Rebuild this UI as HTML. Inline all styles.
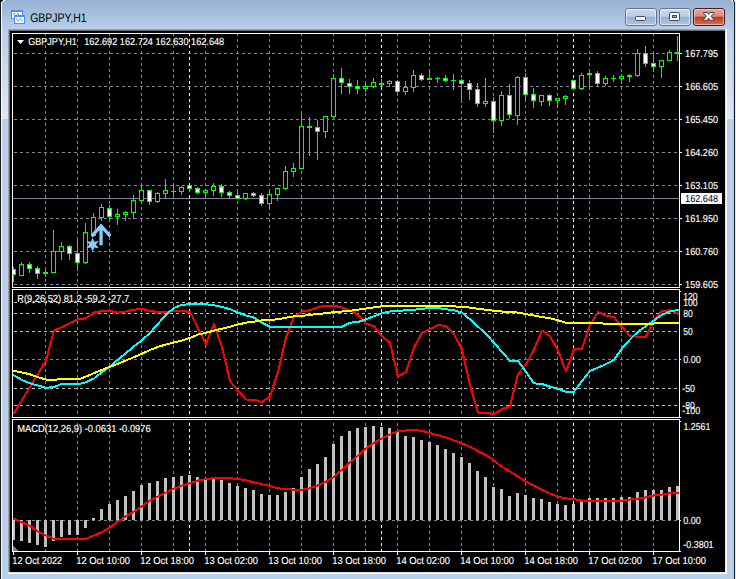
<!DOCTYPE html>
<html lang="en"><head><meta charset="utf-8"><title>GBPJPY,H1</title>
<style>html,body{margin:0;padding:0;background:#b9d0ea;overflow:hidden}svg{display:block}text{font-family:"Liberation Sans", sans-serif;white-space:pre;text-rendering:geometricPrecision}</style></head><body>
<svg width="736" height="579" viewBox="0 0 736 579">
<defs><linearGradient id="gt" x1="0" y1="0" x2="0" y2="1"><stop offset="0" stop-color="#97b1d2"/><stop offset="1" stop-color="#b8d0ea"/></linearGradient><linearGradient id="gb" x1="0" y1="0" x2="0" y2="1"><stop offset="0" stop-color="#cddcee"/><stop offset="0.46" stop-color="#b9cde5"/><stop offset="0.5" stop-color="#97b0d1"/><stop offset="1" stop-color="#b0c8e3"/></linearGradient><linearGradient id="gr" x1="0" y1="0" x2="0" y2="1"><stop offset="0" stop-color="#e8aa9c"/><stop offset="0.46" stop-color="#d78a78"/><stop offset="0.5" stop-color="#b93a1e"/><stop offset="1" stop-color="#d2745e"/></linearGradient><clipPath id="cm"><rect x="13" y="34" width="666" height="253"/></clipPath><clipPath id="c1"><rect x="13" y="290" width="666" height="127"/></clipPath><clipPath id="c2"><rect x="13" y="420" width="666" height="131"/></clipPath></defs>
<rect x="0" y="0" width="736" height="579" fill="#b9d0ea"/>
<rect x="0" y="0" width="736" height="30" fill="url(#gt)"/>
<linearGradient id="gs" x1="0" y1="0" x2="0" y2="1"><stop offset="0" stop-color="#fff" stop-opacity="0"/><stop offset="1" stop-color="#fff" stop-opacity="0.5"/></linearGradient>
<rect x="2" y="30" width="6" height="89" fill="url(#gs)"/>
<rect x="727" y="30" width="6" height="89" fill="url(#gs)"/>
<rect x="0" y="2" width="1" height="577" fill="#1a1a1a"/>
<rect x="1" y="2" width="1" height="577" fill="#fbfcfe"/>
<rect x="735" y="2" width="1" height="577" fill="#dfe5ee"/>
<rect x="734" y="2" width="1" height="577" fill="#1e2228"/>
<rect x="733" y="2" width="1" height="577" fill="#7fdcf7"/>
<path d="M0 0H3V1H2V2H0Z" fill="#1a1a1a"/>
<path d="M3 0h2v1h-1v1h-2v-1h1z" fill="#e8eef6"/>
<path d="M733 0h1v2h-1z" fill="#1e2228"/>
<path d="M731 0h2v2h-1v-1h-1z" fill="#e8f4fb"/>
<path d="M734 0h2v2h-2z" fill="#dfe5ee"/>
<g shape-rendering="crispEdges">
<rect x="11" y="10" width="12" height="9" fill="#4d8cf6"/>
<rect x="12" y="12" width="10" height="6" fill="#fff"/>
<rect x="14" y="15" width="11" height="9" fill="#4d8cf6"/>
<rect x="15" y="17" width="9" height="6" fill="#fff"/>
</g>
<path d="M13.4 14.6 L15 13.2 M17.2 13 L18.8 15" fill="none" stroke="#4d8cf6" stroke-width="1.1"/>
<polyline points="16.3,18.4 18.3,21.3 20.4,18.5 22.6,21.5" fill="none" stroke="#4d8cf6" stroke-width="0.9"/>
<text x="30.2" y="22" font-size="12.5" fill="#000" text-anchor="start" textLength="56.4" lengthAdjust="spacingAndGlyphs">GBPJPY,H1</text>
<rect x="625.5" y="8.5" width="31" height="17" rx="2.5" fill="url(#gb)" stroke="#63738c"/>
<rect x="626.5" y="9.5" width="29" height="15" rx="1.5" fill="none" stroke="#ffffff" stroke-opacity="0.55"/>
<rect x="659.5" y="8.5" width="31" height="17" rx="2.5" fill="url(#gb)" stroke="#63738c"/>
<rect x="660.5" y="9.5" width="29" height="15" rx="1.5" fill="none" stroke="#ffffff" stroke-opacity="0.55"/>
<rect x="693.5" y="8.5" width="31" height="17" rx="2.5" fill="url(#gr)" stroke="#4b1822"/>
<rect x="694.5" y="9.5" width="29" height="15" rx="1.5" fill="none" stroke="#ffd9cf" stroke-opacity="0.55"/>
<rect x="635.5" y="16.5" width="10" height="4" rx="1" fill="#f4f4f4" stroke="#414b5c"/>
<rect x="669.5" y="12.5" width="10" height="8" rx="1" fill="#f6f6f6" stroke="#414b5c"/><rect x="672.5" y="15.5" width="4" height="2" fill="#8fa9cb" stroke="#414b5c"/>
<polygon points="703.90,12.90 707.20,12.90 708.70,15.10 710.20,12.90 713.50,12.90 710.45,16.30 713.50,19.70 710.20,19.70 708.70,17.50 707.20,19.70 703.90,19.70 706.95,16.30" fill="#fff" stroke="#40475e" stroke-width="1.7" stroke-linejoin="round" paint-order="stroke"/>
<g shape-rendering="crispEdges">
<rect x="8" y="29" width="719" height="545" fill="#ffffff"/>
<rect x="8" y="29" width="718" height="544" fill="#e3e3e3"/>
<rect x="8" y="29" width="717" height="543" fill="#a0a0a0"/>
<rect x="9" y="30" width="716" height="542" fill="#696969"/>
<rect x="10" y="31" width="715" height="541" fill="#000000"/>
<line x1="45.5" y1="34" x2="45.5" y2="287" stroke="#778899" stroke-dasharray="3 3" stroke-dashoffset="1"/>
<line x1="77.5" y1="34" x2="77.5" y2="287" stroke="#778899" stroke-dasharray="3 3" stroke-dashoffset="1"/>
<line x1="109.5" y1="34" x2="109.5" y2="287" stroke="#778899" stroke-dasharray="3 3" stroke-dashoffset="1"/>
<line x1="141.5" y1="34" x2="141.5" y2="287" stroke="#778899" stroke-dasharray="3 3" stroke-dashoffset="1"/>
<line x1="173.5" y1="34" x2="173.5" y2="287" stroke="#778899" stroke-dasharray="3 3" stroke-dashoffset="1"/>
<line x1="205.5" y1="34" x2="205.5" y2="287" stroke="#778899" stroke-dasharray="3 3" stroke-dashoffset="1"/>
<line x1="237.5" y1="34" x2="237.5" y2="287" stroke="#778899" stroke-dasharray="3 3" stroke-dashoffset="1"/>
<line x1="269.5" y1="34" x2="269.5" y2="287" stroke="#778899" stroke-dasharray="3 3" stroke-dashoffset="1"/>
<line x1="301.5" y1="34" x2="301.5" y2="287" stroke="#778899" stroke-dasharray="3 3" stroke-dashoffset="1"/>
<line x1="333.5" y1="34" x2="333.5" y2="287" stroke="#778899" stroke-dasharray="3 3" stroke-dashoffset="1"/>
<line x1="365.5" y1="34" x2="365.5" y2="287" stroke="#778899" stroke-dasharray="3 3" stroke-dashoffset="1"/>
<line x1="397.5" y1="34" x2="397.5" y2="287" stroke="#778899" stroke-dasharray="3 3" stroke-dashoffset="1"/>
<line x1="429.5" y1="34" x2="429.5" y2="287" stroke="#778899" stroke-dasharray="3 3" stroke-dashoffset="1"/>
<line x1="461.5" y1="34" x2="461.5" y2="287" stroke="#778899" stroke-dasharray="3 3" stroke-dashoffset="1"/>
<line x1="493.5" y1="34" x2="493.5" y2="287" stroke="#778899" stroke-dasharray="3 3" stroke-dashoffset="1"/>
<line x1="525.5" y1="34" x2="525.5" y2="287" stroke="#778899" stroke-dasharray="3 3" stroke-dashoffset="1"/>
<line x1="557.5" y1="34" x2="557.5" y2="287" stroke="#778899" stroke-dasharray="3 3" stroke-dashoffset="1"/>
<line x1="589.5" y1="34" x2="589.5" y2="287" stroke="#778899" stroke-dasharray="3 3" stroke-dashoffset="1"/>
<line x1="621.5" y1="34" x2="621.5" y2="287" stroke="#778899" stroke-dasharray="3 3" stroke-dashoffset="1"/>
<line x1="653.5" y1="34" x2="653.5" y2="287" stroke="#778899" stroke-dasharray="3 3" stroke-dashoffset="1"/>
<line x1="189.5" y1="34" x2="189.5" y2="287" stroke="#f4f4f4" stroke-dasharray="3 3" stroke-dashoffset="1"/>
<line x1="381.5" y1="34" x2="381.5" y2="287" stroke="#f4f4f4" stroke-dasharray="3 3" stroke-dashoffset="1"/>
<line x1="573.5" y1="34" x2="573.5" y2="287" stroke="#f4f4f4" stroke-dasharray="3 3" stroke-dashoffset="1"/>
<line x1="45.5" y1="290" x2="45.5" y2="417" stroke="#778899" stroke-dasharray="3 3" stroke-dashoffset="5"/>
<line x1="77.5" y1="290" x2="77.5" y2="417" stroke="#778899" stroke-dasharray="3 3" stroke-dashoffset="5"/>
<line x1="109.5" y1="290" x2="109.5" y2="417" stroke="#778899" stroke-dasharray="3 3" stroke-dashoffset="5"/>
<line x1="141.5" y1="290" x2="141.5" y2="417" stroke="#778899" stroke-dasharray="3 3" stroke-dashoffset="5"/>
<line x1="173.5" y1="290" x2="173.5" y2="417" stroke="#778899" stroke-dasharray="3 3" stroke-dashoffset="5"/>
<line x1="205.5" y1="290" x2="205.5" y2="417" stroke="#778899" stroke-dasharray="3 3" stroke-dashoffset="5"/>
<line x1="237.5" y1="290" x2="237.5" y2="417" stroke="#778899" stroke-dasharray="3 3" stroke-dashoffset="5"/>
<line x1="269.5" y1="290" x2="269.5" y2="417" stroke="#778899" stroke-dasharray="3 3" stroke-dashoffset="5"/>
<line x1="301.5" y1="290" x2="301.5" y2="417" stroke="#778899" stroke-dasharray="3 3" stroke-dashoffset="5"/>
<line x1="333.5" y1="290" x2="333.5" y2="417" stroke="#778899" stroke-dasharray="3 3" stroke-dashoffset="5"/>
<line x1="365.5" y1="290" x2="365.5" y2="417" stroke="#778899" stroke-dasharray="3 3" stroke-dashoffset="5"/>
<line x1="397.5" y1="290" x2="397.5" y2="417" stroke="#778899" stroke-dasharray="3 3" stroke-dashoffset="5"/>
<line x1="429.5" y1="290" x2="429.5" y2="417" stroke="#778899" stroke-dasharray="3 3" stroke-dashoffset="5"/>
<line x1="461.5" y1="290" x2="461.5" y2="417" stroke="#778899" stroke-dasharray="3 3" stroke-dashoffset="5"/>
<line x1="493.5" y1="290" x2="493.5" y2="417" stroke="#778899" stroke-dasharray="3 3" stroke-dashoffset="5"/>
<line x1="525.5" y1="290" x2="525.5" y2="417" stroke="#778899" stroke-dasharray="3 3" stroke-dashoffset="5"/>
<line x1="557.5" y1="290" x2="557.5" y2="417" stroke="#778899" stroke-dasharray="3 3" stroke-dashoffset="5"/>
<line x1="589.5" y1="290" x2="589.5" y2="417" stroke="#778899" stroke-dasharray="3 3" stroke-dashoffset="5"/>
<line x1="621.5" y1="290" x2="621.5" y2="417" stroke="#778899" stroke-dasharray="3 3" stroke-dashoffset="5"/>
<line x1="653.5" y1="290" x2="653.5" y2="417" stroke="#778899" stroke-dasharray="3 3" stroke-dashoffset="5"/>
<line x1="189.5" y1="290" x2="189.5" y2="417" stroke="#f4f4f4" stroke-dasharray="3 3" stroke-dashoffset="5"/>
<line x1="381.5" y1="290" x2="381.5" y2="417" stroke="#f4f4f4" stroke-dasharray="3 3" stroke-dashoffset="5"/>
<line x1="573.5" y1="290" x2="573.5" y2="417" stroke="#f4f4f4" stroke-dasharray="3 3" stroke-dashoffset="5"/>
<line x1="45.5" y1="420" x2="45.5" y2="551" stroke="#778899" stroke-dasharray="3 3" stroke-dashoffset="3"/>
<line x1="77.5" y1="420" x2="77.5" y2="551" stroke="#778899" stroke-dasharray="3 3" stroke-dashoffset="3"/>
<line x1="109.5" y1="420" x2="109.5" y2="551" stroke="#778899" stroke-dasharray="3 3" stroke-dashoffset="3"/>
<line x1="141.5" y1="420" x2="141.5" y2="551" stroke="#778899" stroke-dasharray="3 3" stroke-dashoffset="3"/>
<line x1="173.5" y1="420" x2="173.5" y2="551" stroke="#778899" stroke-dasharray="3 3" stroke-dashoffset="3"/>
<line x1="205.5" y1="420" x2="205.5" y2="551" stroke="#778899" stroke-dasharray="3 3" stroke-dashoffset="3"/>
<line x1="237.5" y1="420" x2="237.5" y2="551" stroke="#778899" stroke-dasharray="3 3" stroke-dashoffset="3"/>
<line x1="269.5" y1="420" x2="269.5" y2="551" stroke="#778899" stroke-dasharray="3 3" stroke-dashoffset="3"/>
<line x1="301.5" y1="420" x2="301.5" y2="551" stroke="#778899" stroke-dasharray="3 3" stroke-dashoffset="3"/>
<line x1="333.5" y1="420" x2="333.5" y2="551" stroke="#778899" stroke-dasharray="3 3" stroke-dashoffset="3"/>
<line x1="365.5" y1="420" x2="365.5" y2="551" stroke="#778899" stroke-dasharray="3 3" stroke-dashoffset="3"/>
<line x1="397.5" y1="420" x2="397.5" y2="551" stroke="#778899" stroke-dasharray="3 3" stroke-dashoffset="3"/>
<line x1="429.5" y1="420" x2="429.5" y2="551" stroke="#778899" stroke-dasharray="3 3" stroke-dashoffset="3"/>
<line x1="461.5" y1="420" x2="461.5" y2="551" stroke="#778899" stroke-dasharray="3 3" stroke-dashoffset="3"/>
<line x1="493.5" y1="420" x2="493.5" y2="551" stroke="#778899" stroke-dasharray="3 3" stroke-dashoffset="3"/>
<line x1="525.5" y1="420" x2="525.5" y2="551" stroke="#778899" stroke-dasharray="3 3" stroke-dashoffset="3"/>
<line x1="557.5" y1="420" x2="557.5" y2="551" stroke="#778899" stroke-dasharray="3 3" stroke-dashoffset="3"/>
<line x1="589.5" y1="420" x2="589.5" y2="551" stroke="#778899" stroke-dasharray="3 3" stroke-dashoffset="3"/>
<line x1="621.5" y1="420" x2="621.5" y2="551" stroke="#778899" stroke-dasharray="3 3" stroke-dashoffset="3"/>
<line x1="653.5" y1="420" x2="653.5" y2="551" stroke="#778899" stroke-dasharray="3 3" stroke-dashoffset="3"/>
<line x1="189.5" y1="420" x2="189.5" y2="551" stroke="#f4f4f4" stroke-dasharray="3 3" stroke-dashoffset="3"/>
<line x1="381.5" y1="420" x2="381.5" y2="551" stroke="#f4f4f4" stroke-dasharray="3 3" stroke-dashoffset="3"/>
<line x1="573.5" y1="420" x2="573.5" y2="551" stroke="#f4f4f4" stroke-dasharray="3 3" stroke-dashoffset="3"/>
<line x1="13" y1="53.5" x2="679" y2="53.5" stroke="#778899" stroke-dasharray="3 3" stroke-dashoffset="5"/>
<line x1="13" y1="86.5" x2="679" y2="86.5" stroke="#778899" stroke-dasharray="3 3" stroke-dashoffset="5"/>
<line x1="13" y1="119.5" x2="679" y2="119.5" stroke="#778899" stroke-dasharray="3 3" stroke-dashoffset="5"/>
<line x1="13" y1="152.5" x2="679" y2="152.5" stroke="#778899" stroke-dasharray="3 3" stroke-dashoffset="5"/>
<line x1="13" y1="185.5" x2="679" y2="185.5" stroke="#778899" stroke-dasharray="3 3" stroke-dashoffset="5"/>
<line x1="13" y1="218.5" x2="679" y2="218.5" stroke="#778899" stroke-dasharray="3 3" stroke-dashoffset="5"/>
<line x1="13" y1="251.5" x2="679" y2="251.5" stroke="#778899" stroke-dasharray="3 3" stroke-dashoffset="5"/>
<line x1="13" y1="284.5" x2="679" y2="284.5" stroke="#778899" stroke-dasharray="3 3" stroke-dashoffset="5"/>
<rect x="13" y="198" width="666" height="1" fill="#778899"/>
<line x1="13" y1="302.5" x2="679" y2="302.5" stroke="#c0c0c0" stroke-dasharray="3 3" stroke-dashoffset="5"/>
<line x1="13" y1="313.5" x2="679" y2="313.5" stroke="#c0c0c0" stroke-dasharray="3 3" stroke-dashoffset="5"/>
<line x1="13" y1="331.5" x2="679" y2="331.5" stroke="#c0c0c0" stroke-dasharray="3 3" stroke-dashoffset="5"/>
<line x1="13" y1="388.5" x2="679" y2="388.5" stroke="#c0c0c0" stroke-dasharray="3 3" stroke-dashoffset="5"/>
<line x1="13" y1="405.5" x2="679" y2="405.5" stroke="#c0c0c0" stroke-dasharray="3 3" stroke-dashoffset="5"/>
<line x1="13" y1="359.5" x2="679" y2="359.5" stroke="#778899" stroke-dasharray="3 3" stroke-dashoffset="5"/>
<line x1="13" y1="520.5" x2="679" y2="520.5" stroke="#778899" stroke-dasharray="3 3" stroke-dashoffset="5"/>
<rect x="12" y="33" width="668" height="1" fill="#fff"/>
<rect x="12" y="287" width="668" height="1" fill="#fff"/>
<rect x="12" y="289" width="668" height="1" fill="#fff"/>
<rect x="12" y="417" width="668" height="1" fill="#fff"/>
<rect x="12" y="419" width="668" height="1" fill="#fff"/>
<rect x="12" y="551" width="668" height="1" fill="#fff"/>
<rect x="12" y="33" width="1" height="255" fill="#fff"/>
<rect x="12" y="289" width="1" height="129" fill="#fff"/>
<rect x="12" y="419" width="1" height="133" fill="#fff"/>
<rect x="679" y="33" width="1" height="255" fill="#fff"/>
<rect x="679" y="289" width="1" height="129" fill="#fff"/>
<rect x="679" y="419" width="1" height="133" fill="#fff"/>
<rect x="680" y="53" width="2" height="1" fill="#fff"/>
<rect x="680" y="86" width="2" height="1" fill="#fff"/>
<rect x="680" y="119" width="2" height="1" fill="#fff"/>
<rect x="680" y="152" width="2" height="1" fill="#fff"/>
<rect x="680" y="185" width="2" height="1" fill="#fff"/>
<rect x="680" y="218" width="2" height="1" fill="#fff"/>
<rect x="680" y="251" width="2" height="1" fill="#fff"/>
<rect x="680" y="284" width="2" height="1" fill="#fff"/>
<rect x="680" y="291" width="1" height="1" fill="#fff"/>
<rect x="680" y="359" width="1" height="1" fill="#fff"/>
<rect x="680" y="417" width="1" height="1" fill="#fff"/>
<rect x="680" y="421" width="1" height="1" fill="#fff"/>
<rect x="680" y="520" width="1" height="1" fill="#fff"/>
<rect x="680" y="551" width="1" height="1" fill="#fff"/>
<rect x="13" y="552" width="1" height="3" fill="#fff"/>
<rect x="77" y="552" width="1" height="3" fill="#fff"/>
<rect x="141" y="552" width="1" height="3" fill="#fff"/>
<rect x="205" y="552" width="1" height="3" fill="#fff"/>
<rect x="269" y="552" width="1" height="3" fill="#fff"/>
<rect x="333" y="552" width="1" height="3" fill="#fff"/>
<rect x="397" y="552" width="1" height="3" fill="#fff"/>
<rect x="461" y="552" width="1" height="3" fill="#fff"/>
<rect x="525" y="552" width="1" height="3" fill="#fff"/>
<rect x="589" y="552" width="1" height="3" fill="#fff"/>
<rect x="653" y="552" width="1" height="3" fill="#fff"/>
</g>
<g shape-rendering="crispEdges" clip-path="url(#cm)">
<rect x="13" y="267" width="1" height="15" fill="#00ff00"/>
<rect x="11" y="269" width="5" height="6" fill="#00ff00"/>
<rect x="12" y="270" width="3" height="4" fill="#fff"/>
<rect x="21" y="262" width="1" height="14" fill="#00ff00"/>
<rect x="19" y="264" width="5" height="12" fill="#00ff00"/>
<rect x="20" y="265" width="3" height="10" fill="#000"/>
<rect x="29" y="262" width="1" height="11" fill="#00ff00"/>
<rect x="27" y="264" width="5" height="5" fill="#00ff00"/>
<rect x="28" y="265" width="3" height="3" fill="#fff"/>
<rect x="37" y="266" width="1" height="13" fill="#00ff00"/>
<rect x="35" y="268" width="5" height="6" fill="#00ff00"/>
<rect x="36" y="269" width="3" height="4" fill="#fff"/>
<rect x="45" y="270" width="1" height="7" fill="#00ff00"/>
<rect x="43" y="272" width="5" height="2" fill="#00ff00"/>
<rect x="53" y="230" width="1" height="43" fill="#00ff00"/>
<rect x="51" y="251" width="5" height="22" fill="#00ff00"/>
<rect x="52" y="252" width="3" height="20" fill="#000"/>
<rect x="61" y="242" width="1" height="18" fill="#00ff00"/>
<rect x="59" y="246" width="5" height="6" fill="#00ff00"/>
<rect x="60" y="247" width="3" height="4" fill="#000"/>
<rect x="69" y="245" width="1" height="15" fill="#00ff00"/>
<rect x="67" y="246" width="5" height="8" fill="#00ff00"/>
<rect x="68" y="247" width="3" height="6" fill="#fff"/>
<rect x="77" y="240" width="1" height="31" fill="#00ff00"/>
<rect x="75" y="253" width="5" height="10" fill="#00ff00"/>
<rect x="76" y="254" width="3" height="8" fill="#fff"/>
<rect x="85" y="223" width="1" height="41" fill="#00ff00"/>
<rect x="83" y="232" width="5" height="31" fill="#00ff00"/>
<rect x="84" y="233" width="3" height="29" fill="#000"/>
<rect x="93" y="213" width="1" height="24" fill="#00ff00"/>
<rect x="91" y="217" width="5" height="19" fill="#00ff00"/>
<rect x="92" y="218" width="3" height="17" fill="#000"/>
<rect x="101" y="204" width="1" height="17" fill="#00ff00"/>
<rect x="99" y="207" width="5" height="11" fill="#00ff00"/>
<rect x="100" y="208" width="3" height="9" fill="#000"/>
<rect x="109" y="205" width="1" height="15" fill="#00ff00"/>
<rect x="107" y="208" width="5" height="9" fill="#00ff00"/>
<rect x="108" y="209" width="3" height="7" fill="#fff"/>
<rect x="117" y="209" width="1" height="16" fill="#00ff00"/>
<rect x="115" y="214" width="5" height="3" fill="#00ff00"/>
<rect x="116" y="215" width="3" height="1" fill="#000"/>
<rect x="125" y="211" width="1" height="10" fill="#00ff00"/>
<rect x="123" y="212" width="5" height="3" fill="#00ff00"/>
<rect x="124" y="213" width="3" height="1" fill="#000"/>
<rect x="133" y="195" width="1" height="24" fill="#00ff00"/>
<rect x="131" y="200" width="5" height="13" fill="#00ff00"/>
<rect x="132" y="201" width="3" height="11" fill="#000"/>
<rect x="141" y="186" width="1" height="17" fill="#00ff00"/>
<rect x="139" y="190" width="5" height="11" fill="#00ff00"/>
<rect x="140" y="191" width="3" height="9" fill="#000"/>
<rect x="149" y="190" width="1" height="15" fill="#00ff00"/>
<rect x="147" y="190" width="5" height="12" fill="#00ff00"/>
<rect x="148" y="191" width="3" height="10" fill="#fff"/>
<rect x="157" y="192" width="1" height="11" fill="#00ff00"/>
<rect x="155" y="193" width="5" height="9" fill="#00ff00"/>
<rect x="156" y="194" width="3" height="7" fill="#000"/>
<rect x="165" y="179" width="1" height="20" fill="#00ff00"/>
<rect x="163" y="190" width="5" height="4" fill="#00ff00"/>
<rect x="164" y="191" width="3" height="2" fill="#000"/>
<rect x="173" y="184" width="1" height="11" fill="#00ff00"/>
<rect x="171" y="191" width="5" height="1" fill="#00ff00"/>
<rect x="181" y="186" width="1" height="9" fill="#00ff00"/>
<rect x="179" y="187" width="5" height="5" fill="#00ff00"/>
<rect x="180" y="188" width="3" height="3" fill="#000"/>
<rect x="189" y="185" width="1" height="7" fill="#00ff00"/>
<rect x="187" y="185" width="5" height="4" fill="#00ff00"/>
<rect x="188" y="186" width="3" height="2" fill="#fff"/>
<rect x="197" y="187" width="1" height="7" fill="#00ff00"/>
<rect x="195" y="188" width="5" height="5" fill="#00ff00"/>
<rect x="196" y="189" width="3" height="3" fill="#fff"/>
<rect x="205" y="189" width="1" height="9" fill="#00ff00"/>
<rect x="203" y="190" width="5" height="3" fill="#00ff00"/>
<rect x="204" y="191" width="3" height="1" fill="#000"/>
<rect x="213" y="183" width="1" height="13" fill="#00ff00"/>
<rect x="211" y="186" width="5" height="5" fill="#00ff00"/>
<rect x="212" y="187" width="3" height="3" fill="#000"/>
<rect x="221" y="184" width="1" height="13" fill="#00ff00"/>
<rect x="219" y="186" width="5" height="7" fill="#00ff00"/>
<rect x="220" y="187" width="3" height="5" fill="#fff"/>
<rect x="229" y="191" width="1" height="7" fill="#00ff00"/>
<rect x="227" y="192" width="5" height="4" fill="#00ff00"/>
<rect x="228" y="193" width="3" height="2" fill="#fff"/>
<rect x="237" y="192" width="1" height="7" fill="#00ff00"/>
<rect x="235" y="195" width="5" height="4" fill="#00ff00"/>
<rect x="236" y="196" width="3" height="2" fill="#fff"/>
<rect x="245" y="193" width="1" height="7" fill="#00ff00"/>
<rect x="243" y="193" width="5" height="6" fill="#00ff00"/>
<rect x="244" y="194" width="3" height="4" fill="#000"/>
<rect x="253" y="192" width="1" height="5" fill="#00ff00"/>
<rect x="251" y="193" width="5" height="3" fill="#00ff00"/>
<rect x="252" y="194" width="3" height="1" fill="#fff"/>
<rect x="261" y="193" width="1" height="13" fill="#00ff00"/>
<rect x="259" y="195" width="5" height="9" fill="#00ff00"/>
<rect x="260" y="196" width="3" height="7" fill="#fff"/>
<rect x="269" y="192" width="1" height="17" fill="#00ff00"/>
<rect x="267" y="194" width="5" height="10" fill="#00ff00"/>
<rect x="268" y="195" width="3" height="8" fill="#000"/>
<rect x="277" y="188" width="1" height="13" fill="#00ff00"/>
<rect x="275" y="188" width="5" height="7" fill="#00ff00"/>
<rect x="276" y="189" width="3" height="5" fill="#000"/>
<rect x="285" y="166" width="1" height="24" fill="#00ff00"/>
<rect x="283" y="171" width="5" height="18" fill="#00ff00"/>
<rect x="284" y="172" width="3" height="16" fill="#000"/>
<rect x="293" y="163" width="1" height="14" fill="#00ff00"/>
<rect x="291" y="168" width="5" height="4" fill="#00ff00"/>
<rect x="292" y="169" width="3" height="2" fill="#000"/>
<rect x="301" y="113" width="1" height="56" fill="#00ff00"/>
<rect x="299" y="126" width="5" height="43" fill="#00ff00"/>
<rect x="300" y="127" width="3" height="41" fill="#000"/>
<rect x="309" y="117" width="1" height="39" fill="#00ff00"/>
<rect x="307" y="126" width="5" height="2" fill="#00ff00"/>
<rect x="317" y="120" width="1" height="40" fill="#00ff00"/>
<rect x="315" y="127" width="5" height="5" fill="#00ff00"/>
<rect x="316" y="128" width="3" height="3" fill="#fff"/>
<rect x="325" y="116" width="1" height="22" fill="#00ff00"/>
<rect x="323" y="116" width="5" height="16" fill="#00ff00"/>
<rect x="324" y="117" width="3" height="14" fill="#000"/>
<rect x="333" y="74" width="1" height="44" fill="#00ff00"/>
<rect x="331" y="78" width="5" height="39" fill="#00ff00"/>
<rect x="332" y="79" width="3" height="37" fill="#000"/>
<rect x="341" y="68" width="1" height="26" fill="#00ff00"/>
<rect x="339" y="78" width="5" height="5" fill="#00ff00"/>
<rect x="340" y="79" width="3" height="3" fill="#fff"/>
<rect x="349" y="79" width="1" height="15" fill="#00ff00"/>
<rect x="347" y="83" width="5" height="4" fill="#00ff00"/>
<rect x="348" y="84" width="3" height="2" fill="#fff"/>
<rect x="357" y="80" width="1" height="14" fill="#00ff00"/>
<rect x="355" y="86" width="5" height="3" fill="#00ff00"/>
<rect x="356" y="87" width="3" height="1" fill="#fff"/>
<rect x="365" y="83" width="1" height="9" fill="#00ff00"/>
<rect x="363" y="86" width="5" height="3" fill="#00ff00"/>
<rect x="364" y="87" width="3" height="1" fill="#000"/>
<rect x="373" y="78" width="1" height="10" fill="#00ff00"/>
<rect x="371" y="82" width="5" height="5" fill="#00ff00"/>
<rect x="372" y="83" width="3" height="3" fill="#000"/>
<rect x="381" y="79" width="1" height="8" fill="#00ff00"/>
<rect x="379" y="83" width="5" height="2" fill="#00ff00"/>
<rect x="389" y="80" width="1" height="7" fill="#00ff00"/>
<rect x="387" y="81" width="5" height="3" fill="#00ff00"/>
<rect x="388" y="82" width="3" height="1" fill="#000"/>
<rect x="397" y="80" width="1" height="13" fill="#00ff00"/>
<rect x="395" y="81" width="5" height="11" fill="#00ff00"/>
<rect x="396" y="82" width="3" height="9" fill="#fff"/>
<rect x="405" y="81" width="1" height="14" fill="#00ff00"/>
<rect x="403" y="87" width="5" height="5" fill="#00ff00"/>
<rect x="404" y="88" width="3" height="3" fill="#000"/>
<rect x="413" y="70" width="1" height="22" fill="#00ff00"/>
<rect x="411" y="75" width="5" height="13" fill="#00ff00"/>
<rect x="412" y="76" width="3" height="11" fill="#000"/>
<rect x="421" y="73" width="1" height="8" fill="#00ff00"/>
<rect x="419" y="75" width="5" height="5" fill="#00ff00"/>
<rect x="420" y="76" width="3" height="3" fill="#fff"/>
<rect x="429" y="70" width="1" height="10" fill="#00ff00"/>
<rect x="427" y="78" width="5" height="2" fill="#00ff00"/>
<rect x="437" y="77" width="1" height="6" fill="#00ff00"/>
<rect x="435" y="78" width="5" height="1" fill="#00ff00"/>
<rect x="445" y="75" width="1" height="7" fill="#00ff00"/>
<rect x="443" y="78" width="5" height="3" fill="#00ff00"/>
<rect x="444" y="79" width="3" height="1" fill="#fff"/>
<rect x="453" y="74" width="1" height="16" fill="#00ff00"/>
<rect x="451" y="80" width="5" height="1" fill="#00ff00"/>
<rect x="461" y="79" width="1" height="24" fill="#00ff00"/>
<rect x="459" y="80" width="5" height="4" fill="#00ff00"/>
<rect x="460" y="81" width="3" height="2" fill="#fff"/>
<rect x="469" y="80" width="1" height="20" fill="#00ff00"/>
<rect x="467" y="83" width="5" height="7" fill="#00ff00"/>
<rect x="468" y="84" width="3" height="5" fill="#fff"/>
<rect x="477" y="83" width="1" height="24" fill="#00ff00"/>
<rect x="475" y="89" width="5" height="15" fill="#00ff00"/>
<rect x="476" y="90" width="3" height="13" fill="#fff"/>
<rect x="485" y="78" width="1" height="29" fill="#00ff00"/>
<rect x="483" y="101" width="5" height="3" fill="#00ff00"/>
<rect x="484" y="102" width="3" height="1" fill="#000"/>
<rect x="493" y="97" width="1" height="36" fill="#00ff00"/>
<rect x="491" y="101" width="5" height="20" fill="#00ff00"/>
<rect x="492" y="102" width="3" height="18" fill="#fff"/>
<rect x="501" y="91" width="1" height="35" fill="#00ff00"/>
<rect x="499" y="95" width="5" height="26" fill="#00ff00"/>
<rect x="500" y="96" width="3" height="24" fill="#000"/>
<rect x="509" y="84" width="1" height="35" fill="#00ff00"/>
<rect x="507" y="95" width="5" height="20" fill="#00ff00"/>
<rect x="508" y="96" width="3" height="18" fill="#fff"/>
<rect x="517" y="76" width="1" height="49" fill="#00ff00"/>
<rect x="515" y="77" width="5" height="39" fill="#00ff00"/>
<rect x="516" y="78" width="3" height="37" fill="#000"/>
<rect x="525" y="73" width="1" height="27" fill="#00ff00"/>
<rect x="523" y="77" width="5" height="18" fill="#00ff00"/>
<rect x="524" y="78" width="3" height="16" fill="#fff"/>
<rect x="533" y="88" width="1" height="20" fill="#00ff00"/>
<rect x="531" y="94" width="5" height="7" fill="#00ff00"/>
<rect x="532" y="95" width="3" height="5" fill="#fff"/>
<rect x="541" y="95" width="1" height="11" fill="#00ff00"/>
<rect x="539" y="95" width="5" height="7" fill="#00ff00"/>
<rect x="540" y="96" width="3" height="5" fill="#000"/>
<rect x="549" y="94" width="1" height="12" fill="#00ff00"/>
<rect x="547" y="95" width="5" height="6" fill="#00ff00"/>
<rect x="548" y="96" width="3" height="4" fill="#fff"/>
<rect x="557" y="98" width="1" height="9" fill="#00ff00"/>
<rect x="555" y="98" width="5" height="3" fill="#00ff00"/>
<rect x="556" y="99" width="3" height="1" fill="#000"/>
<rect x="565" y="95" width="1" height="10" fill="#00ff00"/>
<rect x="563" y="96" width="5" height="3" fill="#00ff00"/>
<rect x="564" y="97" width="3" height="1" fill="#000"/>
<rect x="573" y="80" width="1" height="10" fill="#00ff00"/>
<rect x="571" y="80" width="5" height="9" fill="#00ff00"/>
<rect x="572" y="81" width="3" height="7" fill="#fff"/>
<rect x="581" y="73" width="1" height="17" fill="#00ff00"/>
<rect x="579" y="75" width="5" height="14" fill="#00ff00"/>
<rect x="580" y="76" width="3" height="12" fill="#000"/>
<rect x="589" y="71" width="1" height="17" fill="#00ff00"/>
<rect x="587" y="73" width="5" height="2" fill="#00ff00"/>
<rect x="597" y="71" width="1" height="16" fill="#00ff00"/>
<rect x="595" y="73" width="5" height="11" fill="#00ff00"/>
<rect x="596" y="74" width="3" height="9" fill="#fff"/>
<rect x="605" y="76" width="1" height="10" fill="#00ff00"/>
<rect x="603" y="78" width="5" height="6" fill="#00ff00"/>
<rect x="604" y="79" width="3" height="4" fill="#000"/>
<rect x="613" y="75" width="1" height="7" fill="#00ff00"/>
<rect x="611" y="78" width="5" height="1" fill="#00ff00"/>
<rect x="621" y="74" width="1" height="8" fill="#00ff00"/>
<rect x="619" y="76" width="5" height="3" fill="#00ff00"/>
<rect x="620" y="77" width="3" height="1" fill="#000"/>
<rect x="629" y="74" width="1" height="8" fill="#00ff00"/>
<rect x="627" y="75" width="5" height="2" fill="#00ff00"/>
<rect x="637" y="49" width="1" height="28" fill="#00ff00"/>
<rect x="635" y="53" width="5" height="23" fill="#00ff00"/>
<rect x="636" y="54" width="3" height="21" fill="#000"/>
<rect x="645" y="46" width="1" height="21" fill="#00ff00"/>
<rect x="643" y="53" width="5" height="11" fill="#00ff00"/>
<rect x="644" y="54" width="3" height="9" fill="#fff"/>
<rect x="653" y="54" width="1" height="18" fill="#00ff00"/>
<rect x="651" y="63" width="5" height="4" fill="#00ff00"/>
<rect x="652" y="64" width="3" height="2" fill="#fff"/>
<rect x="661" y="60" width="1" height="18" fill="#00ff00"/>
<rect x="659" y="60" width="5" height="7" fill="#00ff00"/>
<rect x="660" y="61" width="3" height="5" fill="#000"/>
<rect x="669" y="50" width="1" height="11" fill="#00ff00"/>
<rect x="667" y="52" width="5" height="9" fill="#00ff00"/>
<rect x="668" y="53" width="3" height="7" fill="#000"/>
<rect x="677" y="36" width="1" height="25" fill="#00ff00"/>
<rect x="675" y="52" width="5" height="2" fill="#00ff00"/>
</g>
<g clip-path="url(#cm)">
<path d="M101 223.5 L90.7 234.8 L92.6 237.6 L99.4 230.2 L99.4 245.2 L102.7 245.2 L102.7 230.2 L109.4 237.6 L111.3 234.8 Z" fill="#87cefa"/>
<polygon points="92.60,237.40 94.25,241.74 98.84,241.00 95.90,244.60 98.84,248.20 94.25,247.46 92.60,251.80 90.95,247.46 86.36,248.20 89.30,244.60 86.36,241.00 90.95,241.74" fill="#87cefa"/>
</g>
<polyline points="14,413.2 22,400.0 30,386.7 38,373.9 46,360.4 54,330.5 62,327.2 70,323.1 78,319.3 86,318.2 94,312.6 102,311.0 110,311.0 118,312.6 126,311.5 134,309.7 142,308.8 150,311.0 158,311.9 166,311.9 174,311.0 182,311.0 190,311.9 198,328.3 206,344.0 214,323.8 222,347.4 230,381.0 238,391.0 246,399.5 254,399.7 262,402.0 270,396.3 278,372.0 286,337.3 294,317.0 302,311.5 310,310.3 318,307.0 326,305.8 334,305.8 342,307.4 350,310.3 358,314.8 366,323.8 374,326.0 382,336.1 390,342.9 398,376.6 406,372.0 414,347.4 422,332.8 430,329.4 438,324.9 446,326.0 454,333.9 462,349.6 470,385.5 478,412.5 486,412.5 494,414.3 502,409.1 510,406.2 518,374.3 526,364.2 534,349.6 542,330.5 550,336.1 558,350.7 566,371.6 574,349.2 582,348.5 590,324.9 598,312.1 606,315.5 614,317.0 622,327.2 630,335.7 638,336.8 646,336.8 654,320.4 662,311.0 670,310.3 678,313.7" fill="none" stroke="#ff0000" stroke-width="2" stroke-linejoin="round" stroke-linecap="square" shape-rendering="crispEdges" clip-path="url(#c1)"/>
<polyline points="14,375.4 22,380.0 30,383.3 38,385.5 46,387.8 54,387.1 62,383.7 70,384.4 78,384.4 86,382.2 94,378.4 102,372.1 110,366.5 118,359.7 126,353.0 134,346.3 142,340.2 150,332.8 158,323.8 166,314.8 174,308.0 182,304.7 190,304.3 198,304.3 206,304.3 214,305.2 222,307.0 230,309.2 238,312.6 246,315.5 254,317.6 262,322.7 270,326.7 278,326.7 286,326.7 294,326.7 302,326.7 310,326.7 318,326.7 326,326.7 334,326.7 342,326.7 350,322.7 358,322.0 366,319.3 374,316.2 382,313.2 390,311.5 398,310.8 406,310.3 414,309.7 422,308.8 430,308.1 438,308.1 446,309.2 454,310.3 462,312.6 470,319.3 478,326.7 486,333.9 494,342.9 502,351.9 510,360.8 518,360.8 526,372.0 534,383.3 542,384.0 550,386.7 558,388.9 566,391.8 574,391.8 582,381.0 590,371.0 598,367.6 606,364.2 614,359.7 622,348.5 630,339.5 638,331.7 646,326.0 654,320.4 662,314.8 670,311.5 678,309.9" fill="none" stroke="#00ffff" stroke-width="2" stroke-linejoin="round" stroke-linecap="square" shape-rendering="crispEdges" clip-path="url(#c1)"/>
<polyline points="14,371.0 22,372.5 30,374.3 38,377.2 46,379.5 54,380.0 62,378.8 70,379.3 78,379.5 86,376.6 94,373.2 102,369.8 110,366.9 118,363.8 126,360.4 134,357.2 142,353.7 150,350.0 158,346.9 166,344.5 174,342.4 182,340.6 190,337.9 198,334.6 206,332.8 214,330.5 222,328.7 230,326.7 238,324.5 246,322.7 254,321.6 262,320.4 270,319.8 278,319.3 286,317.7 294,316.4 302,316.0 310,314.8 318,314.1 326,313.2 334,312.1 342,311.5 350,310.8 358,309.7 366,308.5 374,307.4 382,306.3 390,305.8 398,305.8 406,305.8 414,305.8 422,305.8 430,305.8 438,305.8 446,305.8 454,306.3 462,307.0 470,307.6 478,308.8 486,309.7 494,310.8 502,311.5 510,311.9 518,312.6 526,314.1 534,315.5 542,317.0 550,318.2 558,320.4 566,322.7 574,323.1 582,323.1 590,323.1 598,323.1 606,323.8 614,324.2 622,324.2 630,324.2 638,324.2 646,323.8 654,323.5 662,323.1 670,323.1 678,323.1" fill="none" stroke="#ffff00" stroke-width="2" stroke-linejoin="round" stroke-linecap="square" shape-rendering="crispEdges" clip-path="url(#c1)"/>
<g shape-rendering="crispEdges" clip-path="url(#c2)">
<rect x="12" y="520" width="3" height="20" fill="#c0c0c0"/>
<rect x="20" y="520" width="3" height="21" fill="#c0c0c0"/>
<rect x="28" y="520" width="3" height="23" fill="#c0c0c0"/>
<rect x="36" y="520" width="3" height="25" fill="#c0c0c0"/>
<rect x="44" y="520" width="3" height="27" fill="#c0c0c0"/>
<rect x="52" y="520" width="3" height="21" fill="#c0c0c0"/>
<rect x="60" y="520" width="3" height="17" fill="#c0c0c0"/>
<rect x="68" y="520" width="3" height="15" fill="#c0c0c0"/>
<rect x="76" y="520" width="3" height="15" fill="#c0c0c0"/>
<rect x="84" y="520" width="3" height="8" fill="#c0c0c0"/>
<rect x="92" y="518" width="3" height="2" fill="#c0c0c0"/>
<rect x="100" y="509" width="3" height="11" fill="#c0c0c0"/>
<rect x="108" y="504" width="3" height="16" fill="#c0c0c0"/>
<rect x="116" y="500" width="3" height="20" fill="#c0c0c0"/>
<rect x="124" y="496" width="3" height="24" fill="#c0c0c0"/>
<rect x="132" y="491" width="3" height="29" fill="#c0c0c0"/>
<rect x="140" y="485" width="3" height="35" fill="#c0c0c0"/>
<rect x="148" y="483" width="3" height="37" fill="#c0c0c0"/>
<rect x="156" y="481" width="3" height="39" fill="#c0c0c0"/>
<rect x="164" y="478" width="3" height="42" fill="#c0c0c0"/>
<rect x="172" y="477" width="3" height="43" fill="#c0c0c0"/>
<rect x="180" y="476" width="3" height="44" fill="#c0c0c0"/>
<rect x="188" y="475" width="3" height="45" fill="#c0c0c0"/>
<rect x="196" y="477" width="3" height="43" fill="#c0c0c0"/>
<rect x="204" y="478" width="3" height="42" fill="#c0c0c0"/>
<rect x="212" y="478" width="3" height="42" fill="#c0c0c0"/>
<rect x="220" y="480" width="3" height="40" fill="#c0c0c0"/>
<rect x="228" y="483" width="3" height="37" fill="#c0c0c0"/>
<rect x="236" y="486" width="3" height="34" fill="#c0c0c0"/>
<rect x="244" y="488" width="3" height="32" fill="#c0c0c0"/>
<rect x="252" y="490" width="3" height="30" fill="#c0c0c0"/>
<rect x="260" y="494" width="3" height="26" fill="#c0c0c0"/>
<rect x="268" y="495" width="3" height="25" fill="#c0c0c0"/>
<rect x="276" y="495" width="3" height="25" fill="#c0c0c0"/>
<rect x="284" y="492" width="3" height="28" fill="#c0c0c0"/>
<rect x="292" y="488" width="3" height="32" fill="#c0c0c0"/>
<rect x="300" y="477" width="3" height="43" fill="#c0c0c0"/>
<rect x="308" y="469" width="3" height="51" fill="#c0c0c0"/>
<rect x="316" y="464" width="3" height="56" fill="#c0c0c0"/>
<rect x="324" y="457" width="3" height="63" fill="#c0c0c0"/>
<rect x="332" y="444" width="3" height="76" fill="#c0c0c0"/>
<rect x="340" y="436" width="3" height="84" fill="#c0c0c0"/>
<rect x="348" y="431" width="3" height="89" fill="#c0c0c0"/>
<rect x="356" y="428" width="3" height="92" fill="#c0c0c0"/>
<rect x="364" y="427" width="3" height="93" fill="#c0c0c0"/>
<rect x="372" y="426" width="3" height="94" fill="#c0c0c0"/>
<rect x="380" y="427" width="3" height="93" fill="#c0c0c0"/>
<rect x="388" y="428" width="3" height="92" fill="#c0c0c0"/>
<rect x="396" y="432" width="3" height="88" fill="#c0c0c0"/>
<rect x="404" y="436" width="3" height="84" fill="#c0c0c0"/>
<rect x="412" y="437" width="3" height="83" fill="#c0c0c0"/>
<rect x="420" y="440" width="3" height="80" fill="#c0c0c0"/>
<rect x="428" y="442" width="3" height="78" fill="#c0c0c0"/>
<rect x="436" y="445" width="3" height="75" fill="#c0c0c0"/>
<rect x="444" y="449" width="3" height="71" fill="#c0c0c0"/>
<rect x="452" y="453" width="3" height="67" fill="#c0c0c0"/>
<rect x="460" y="457" width="3" height="63" fill="#c0c0c0"/>
<rect x="468" y="463" width="3" height="57" fill="#c0c0c0"/>
<rect x="476" y="471" width="3" height="49" fill="#c0c0c0"/>
<rect x="484" y="477" width="3" height="43" fill="#c0c0c0"/>
<rect x="492" y="487" width="3" height="33" fill="#c0c0c0"/>
<rect x="500" y="489" width="3" height="31" fill="#c0c0c0"/>
<rect x="508" y="496" width="3" height="24" fill="#c0c0c0"/>
<rect x="516" y="493" width="3" height="27" fill="#c0c0c0"/>
<rect x="524" y="495" width="3" height="25" fill="#c0c0c0"/>
<rect x="532" y="498" width="3" height="22" fill="#c0c0c0"/>
<rect x="540" y="499" width="3" height="21" fill="#c0c0c0"/>
<rect x="548" y="502" width="3" height="18" fill="#c0c0c0"/>
<rect x="556" y="504" width="3" height="16" fill="#c0c0c0"/>
<rect x="564" y="505" width="3" height="15" fill="#c0c0c0"/>
<rect x="572" y="504" width="3" height="16" fill="#c0c0c0"/>
<rect x="580" y="501" width="3" height="19" fill="#c0c0c0"/>
<rect x="588" y="498" width="3" height="22" fill="#c0c0c0"/>
<rect x="596" y="498" width="3" height="22" fill="#c0c0c0"/>
<rect x="604" y="498" width="3" height="22" fill="#c0c0c0"/>
<rect x="612" y="498" width="3" height="22" fill="#c0c0c0"/>
<rect x="620" y="497" width="3" height="23" fill="#c0c0c0"/>
<rect x="628" y="497" width="3" height="23" fill="#c0c0c0"/>
<rect x="636" y="492" width="3" height="28" fill="#c0c0c0"/>
<rect x="644" y="490" width="3" height="30" fill="#c0c0c0"/>
<rect x="652" y="490" width="3" height="30" fill="#c0c0c0"/>
<rect x="660" y="490" width="3" height="30" fill="#c0c0c0"/>
<rect x="668" y="487" width="3" height="33" fill="#c0c0c0"/>
<rect x="676" y="486" width="3" height="34" fill="#c0c0c0"/>
</g>
<polyline points="14,518.9 22,522.3 30,526.0 38,531.4 46,535.5 54,538.9 62,538.9 70,538.9 78,538.9 86,538.9 94,535.5 102,532.1 110,527.5 118,521.6 126,516.3 134,511.6 142,506.3 150,500.4 158,496.5 166,492.5 174,488.6 182,485.6 190,483.3 198,480.6 206,479.2 214,478.0 222,478.0 230,478.2 238,479.0 246,480.3 254,482.4 262,484.2 270,486.0 278,488.3 286,489.1 294,489.7 302,489.7 310,488.3 318,485.3 326,481.7 334,476.8 342,469.7 350,462.3 358,455.6 366,448.5 374,442.8 382,438.4 390,434.4 398,431.2 406,430.5 414,430.0 422,430.8 430,433.1 438,435.3 446,437.5 454,440.5 462,443.4 470,446.8 478,451.2 486,455.3 494,460.4 502,466.8 510,471.5 518,476.5 526,481.6 534,485.7 542,489.7 550,493.6 558,496.6 566,498.4 574,499.2 582,500.6 590,500.9 598,500.9 606,500.9 614,500.9 622,500.7 630,499.5 638,498.6 646,497.3 654,495.4 662,494.5 670,493.3 678,492.8" fill="none" stroke="#ff0000" stroke-width="2" stroke-linejoin="round" stroke-linecap="square" shape-rendering="crispEdges" clip-path="url(#c2)"/>
<path d="M13 545.5 L18.5 551 L13 551 Z" fill="#778899"/>
<g shape-rendering="crispEdges">
<rect x="681" y="193" width="41" height="11" fill="#fff"/>
</g>
<path d="M17 40h7l-3.5 4z" fill="#fff"/>
<text x="28.3" y="45" font-size="10.2" fill="#fff" text-anchor="start" textLength="48.5" lengthAdjust="spacingAndGlyphs" stroke="#fff" stroke-width="0.14">GBPJPY,H1</text>
<text x="84.2" y="45" font-size="10.2" fill="#fff" text-anchor="start" textLength="140" lengthAdjust="spacingAndGlyphs" stroke="#fff" stroke-width="0.14">162.692 162.724 162.630 162.648</text>
<text x="685.1" y="57" font-size="10.2" fill="#fff" text-anchor="start" textLength="33" lengthAdjust="spacingAndGlyphs" stroke="#fff" stroke-width="0.14">167.795</text>
<text x="685.1" y="90" font-size="10.2" fill="#fff" text-anchor="start" textLength="33" lengthAdjust="spacingAndGlyphs" stroke="#fff" stroke-width="0.14">166.605</text>
<text x="685.1" y="123" font-size="10.2" fill="#fff" text-anchor="start" textLength="33" lengthAdjust="spacingAndGlyphs" stroke="#fff" stroke-width="0.14">165.450</text>
<text x="685.1" y="156" font-size="10.2" fill="#fff" text-anchor="start" textLength="33" lengthAdjust="spacingAndGlyphs" stroke="#fff" stroke-width="0.14">164.260</text>
<text x="685.1" y="189" font-size="10.2" fill="#fff" text-anchor="start" textLength="33" lengthAdjust="spacingAndGlyphs" stroke="#fff" stroke-width="0.14">163.105</text>
<text x="685.1" y="222" font-size="10.2" fill="#fff" text-anchor="start" textLength="33" lengthAdjust="spacingAndGlyphs" stroke="#fff" stroke-width="0.14">161.950</text>
<text x="685.1" y="255" font-size="10.2" fill="#fff" text-anchor="start" textLength="33" lengthAdjust="spacingAndGlyphs" stroke="#fff" stroke-width="0.14">160.760</text>
<text x="685.1" y="288" font-size="10.2" fill="#fff" text-anchor="start" textLength="33" lengthAdjust="spacingAndGlyphs" stroke="#fff" stroke-width="0.14">159.605</text>
<text x="685.1" y="202" font-size="10.2" fill="#000" text-anchor="start" textLength="33" lengthAdjust="spacingAndGlyphs">162.648</text>
<text x="17.2" y="301.5" font-size="10.2" fill="#fff" text-anchor="start" textLength="112" lengthAdjust="spacingAndGlyphs" stroke="#fff" stroke-width="0.14">R(9,26,52) 81.2 -59.2 -27.7</text>
<text x="683.2" y="300" font-size="10.2" fill="#fff" text-anchor="start" textLength="14.5" lengthAdjust="spacingAndGlyphs" stroke="#fff" stroke-width="0.14">120</text>
<text x="683.2" y="306" font-size="10.2" fill="#fff" text-anchor="start" textLength="14.5" lengthAdjust="spacingAndGlyphs" stroke="#fff" stroke-width="0.14">100</text>
<text x="683.2" y="317" font-size="10.2" fill="#fff" text-anchor="start" textLength="9.6" lengthAdjust="spacingAndGlyphs" stroke="#fff" stroke-width="0.14">80</text>
<text x="683.2" y="335" font-size="10.2" fill="#fff" text-anchor="start" textLength="9.6" lengthAdjust="spacingAndGlyphs" stroke="#fff" stroke-width="0.14">50</text>
<text x="683.2" y="363" font-size="10.2" fill="#fff" text-anchor="start" textLength="17.5" lengthAdjust="spacingAndGlyphs" stroke="#fff" stroke-width="0.14">0.00</text>
<text x="682.3" y="392" font-size="10.2" fill="#fff" text-anchor="start" textLength="12.6" lengthAdjust="spacingAndGlyphs" stroke="#fff" stroke-width="0.14">-50</text>
<text x="682.3" y="409" font-size="10.2" fill="#fff" text-anchor="start" textLength="12.6" lengthAdjust="spacingAndGlyphs" stroke="#fff" stroke-width="0.14">-80</text>
<text x="682.3" y="414" font-size="10.2" fill="#fff" text-anchor="start" textLength="18" lengthAdjust="spacingAndGlyphs" stroke="#fff" stroke-width="0.14">-100</text>
<text x="17.2" y="432" font-size="10.2" fill="#fff" text-anchor="start" textLength="133.5" lengthAdjust="spacingAndGlyphs" stroke="#fff" stroke-width="0.14">MACD(12,26,9) -0.0631 -0.0976</text>
<text x="683.5" y="430" font-size="10.2" fill="#fff" text-anchor="start" textLength="26.8" lengthAdjust="spacingAndGlyphs" stroke="#fff" stroke-width="0.14">1.2561</text>
<text x="683.2" y="524" font-size="10.2" fill="#fff" text-anchor="start" textLength="17.5" lengthAdjust="spacingAndGlyphs" stroke="#fff" stroke-width="0.14">0.00</text>
<text x="683.3" y="548" font-size="10.2" fill="#fff" text-anchor="start" textLength="30.3" lengthAdjust="spacingAndGlyphs" stroke="#fff" stroke-width="0.14">-0.3801</text>
<text x="12.3" y="564" font-size="10.2" fill="#fff" text-anchor="start" textLength="49.9" lengthAdjust="spacingAndGlyphs" stroke="#fff" stroke-width="0.14">12 Oct 2022</text>
<text x="76.3" y="564" font-size="10.2" fill="#fff" text-anchor="start" textLength="53.6" lengthAdjust="spacingAndGlyphs" stroke="#fff" stroke-width="0.14">12 Oct 10:00</text>
<text x="140.3" y="564" font-size="10.2" fill="#fff" text-anchor="start" textLength="53.6" lengthAdjust="spacingAndGlyphs" stroke="#fff" stroke-width="0.14">12 Oct 18:00</text>
<text x="204.3" y="564" font-size="10.2" fill="#fff" text-anchor="start" textLength="53.6" lengthAdjust="spacingAndGlyphs" stroke="#fff" stroke-width="0.14">13 Oct 02:00</text>
<text x="268.3" y="564" font-size="10.2" fill="#fff" text-anchor="start" textLength="53.6" lengthAdjust="spacingAndGlyphs" stroke="#fff" stroke-width="0.14">13 Oct 10:00</text>
<text x="332.3" y="564" font-size="10.2" fill="#fff" text-anchor="start" textLength="53.6" lengthAdjust="spacingAndGlyphs" stroke="#fff" stroke-width="0.14">13 Oct 18:00</text>
<text x="396.3" y="564" font-size="10.2" fill="#fff" text-anchor="start" textLength="53.6" lengthAdjust="spacingAndGlyphs" stroke="#fff" stroke-width="0.14">14 Oct 02:00</text>
<text x="460.3" y="564" font-size="10.2" fill="#fff" text-anchor="start" textLength="53.6" lengthAdjust="spacingAndGlyphs" stroke="#fff" stroke-width="0.14">14 Oct 10:00</text>
<text x="524.3" y="564" font-size="10.2" fill="#fff" text-anchor="start" textLength="53.6" lengthAdjust="spacingAndGlyphs" stroke="#fff" stroke-width="0.14">14 Oct 18:00</text>
<text x="588.3" y="564" font-size="10.2" fill="#fff" text-anchor="start" textLength="53.6" lengthAdjust="spacingAndGlyphs" stroke="#fff" stroke-width="0.14">17 Oct 02:00</text>
<text x="652.3" y="564" font-size="10.2" fill="#fff" text-anchor="start" textLength="53.6" lengthAdjust="spacingAndGlyphs" stroke="#fff" stroke-width="0.14">17 Oct 10:00</text>
</svg></body></html>
